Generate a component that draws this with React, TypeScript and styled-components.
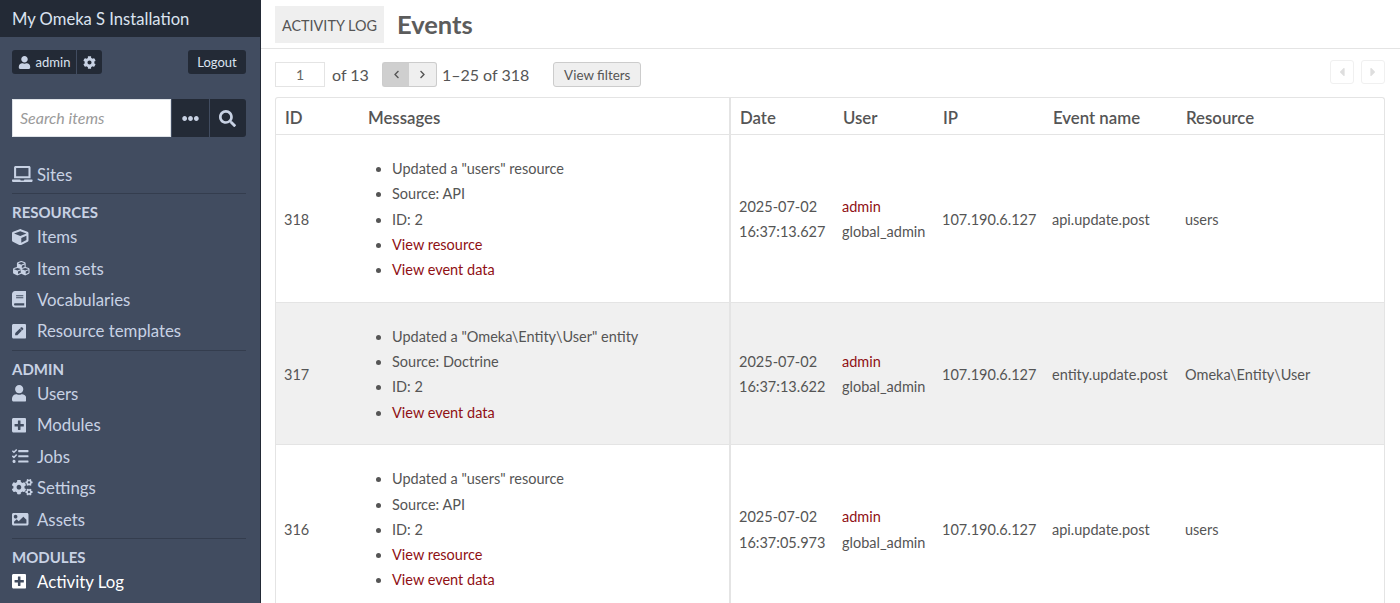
import React from 'react';
import styled, { createGlobalStyle } from 'styled-components';
import {
  FaUser, FaCog, FaEllipsisH, FaSearch, FaLaptop, FaCube, FaCubes, FaBook,
  FaPenSquare, FaPlusSquare, FaTasks, FaCogs, FaImage, FaChevronLeft, FaChevronRight, FaCaretLeft, FaCaretRight,
} from 'react-icons/fa';

const GlobalStyle = createGlobalStyle`
  html, body {
    margin: 0;
    height: 100%;
    overflow: hidden;
    background: #fff;
  }
  body {
    font-family: Lato, "Open Sans", sans-serif;
    color: #555;
  }
  * { box-sizing: border-box; }
`;

const Page = styled.div`
  display: flex;
  height: 603px;
  overflow: hidden;
`;

const Sidebar = styled.aside`
  flex: 0 0 261px;
  min-width: 0;
  background: #414c60;
  border-right: 1px solid #232a36;
  color: #c8d2e4;
`;

const Brand = styled.div`
  height: 37px;
  padding: 0 12px;
  background: #232a36;
  color: #dbe3f0;
  font-size: 16.6px;
  line-height: 38px;
`;

const UserBar = styled.div`
  display: flex;
  justify-content: space-between;
  padding: 13px 14px 0 12px;
`;

const UserGroup = styled.div`
  display: flex;
  gap: 1px;
`;

const DarkButton = styled.button<{ $left?: boolean; $right?: boolean }>`
  display: flex;
  align-items: center;
  justify-content: center;
  height: 24px;
  padding: 0;
  border: 0;
  border-radius: ${p => (p.$left ? '3px 0 0 3px' : p.$right ? '0 3px 3px 0' : '3px')};
  background: #232a36;
  color: #dbe3f0;
  font: 13px Lato, sans-serif;
  svg { font-size: 13px; color: #c8d2e4; }
`;

const AdminButton = styled(DarkButton)`
  gap: 5px;
  width: 64px;
`;

const GearButton = styled(DarkButton)`
  width: 25px;
`;

const LogoutButton = styled(DarkButton)`
  width: 58px;
`;

const SearchForm = styled.form`
  display: flex;
  gap: 1px;
  margin: 25px 14px 0 12px;
  height: 38px;
`;

const SearchInput = styled.input`
  flex: 1;
  width: 0;
  min-width: 0;
  padding: 0 7px 2px;
  border: 1px solid #dfe3e8;
  background: #fff;
  font: italic 16px Lato, sans-serif;
  color: #555;
  &::placeholder { color: #9a9a9a; opacity: 1; }
`;

const SearchButton = styled.button<{ $last?: boolean }>`
  display: flex;
  align-items: center;
  justify-content: center;
  width: 36.5px;
  padding: 0;
  border: 0;
  border-radius: ${p => (p.$last ? '0 3px 3px 0' : '0')};
  background: #232a36;
  color: #c8d2e4;
  font-size: 17px;
`;

const Nav = styled.nav`
  margin-top: 21.5px;
  padding: 0 14px 0 12px;
`;

const NavSection = styled.div`
  padding-bottom: 3px;
  margin-bottom: 9.2px;
  border-bottom: 1px solid #343d4e;
  &:last-child { border-bottom: 0; }
`;

const SectionTitle = styled.div`
  font-size: 15px;
  font-weight: 700;
  line-height: 18px;
`;

const NavLink = styled.a<{ $active?: boolean }>`
  display: flex;
  align-items: center;
  height: 31.4px;
  font-size: 16.8px;
  color: ${p => (p.$active ? '#fff' : '#c8d2e4')};
`;

const NavIcon = styled.span<{ $iconWidth: number }>`
  display: flex;
  width: 25px;
  flex: none;
  svg {
    height: 16.5px;
    width: ${p => p.$iconWidth}px;
  }
`;

const Main = styled.main`
  flex: 1;
  min-width: 0;
`;

const Header = styled.header`
  display: flex;
  align-items: center;
  gap: 13px;
  height: 49px;
  padding: 0 14px;
  border-bottom: 1px solid #e4e4e4;
`;

const Module = styled.div`
  height: 37px;
  padding: 0 7px;
  background: #efefef;
  font-size: 14.4px;
  line-height: 39px;
`;

const Title = styled.h1`
  margin: 0;
  font-size: 25.5px;
  font-weight: 700;
  color: #5c5c5c;
`;

const Toolbar = styled.div`
  display: flex;
  align-items: center;
  height: 48px;
  padding: 3px 15px 0 14px;
  font-size: 16px;
`;

const PageInput = styled.input`
  width: 50px;
  height: 25px;
  margin-right: 7px;
  border: 1px solid #e4e4e4;
  text-align: center;
  font: 14px Lato, sans-serif;
  color: #666;
`;

const Pager = styled.div`
  display: flex;
  margin: 0 5px 0 13px;
`;

const PagerButton = styled.button<{ $pressed?: boolean; $side: 'left' | 'right' }>`
  display: flex;
  align-items: center;
  justify-content: center;
  width: 27.5px;
  height: 25px;
  padding: 0;
  border: 1px solid #ccc;
  border-width: ${p => (p.$side === 'left' ? '1px 0 1px 1px' : '1px 1px 1px 0')};
  border-radius: ${p => (p.$side === 'left' ? '3px 0 0 3px' : '0 3px 3px 0')};
  background: ${p => (p.$pressed ? '#cfcfcf' : '#efefef')};
  color: #555;
  font-size: 9px;
`;

const FiltersButton = styled.button`
  width: 88px;
  height: 25px;
  margin-left: 24px;
  padding: 0;
  border: 1px solid #ccc;
  border-radius: 3px;
  background: #efefef;
  color: #555;
  font: 13.4px Lato, sans-serif;
`;

const CornerNav = styled.div`
  display: flex;
  gap: 7px;
  margin: -5px 0 0 auto;
`;

const CornerButton = styled.span`
  display: flex;
  align-items: center;
  justify-content: center;
  width: 24px;
  height: 24px;
  border: 1px solid #f0f0f0;
  border-radius: 3px;
  color: #dedede;
  font-size: 14px;
`;

const TableWrap = styled.div`
  margin: 0 15px 0 14px;
  border: 1px solid #e4e4e4;
  border-bottom: 0;
  border-radius: 3px 3px 0 0;
`;

const Table = styled.table`
  width: 100%;
  table-layout: fixed;
  border-collapse: collapse;
  font-size: 14.5px;
`;

const HeadCell = styled.th<{ $divider?: boolean }>`
  height: 36.5px;
  padding: 2px 9px 0;
  text-align: left;
  font-size: 16.8px;
  font-weight: 600;
  color: #555;
  border-bottom: 1px solid #e4e4e4;
  border-left: ${p => (p.$divider ? '2px solid #e4e4e4' : '0')};
`;

const Row = styled.tr<{ $shaded?: boolean }>`
  background: ${p => (p.$shaded ? '#f0f0f0' : '#fff')};
  border-bottom: 1px solid #e4e4e4;
`;

const Cell = styled.td<{ $divider?: boolean }>`
  padding: 2px 8px 0;
  line-height: 25.2px;
  border-left: ${p => (p.$divider ? '2px solid #e4e4e4' : '0')};
`;

const Messages = styled.ul`
  margin: 19.2px 0 19.5px;
  padding: 0 0 0 25px;
`;

const RedLink = styled.a`
  color: #8f1014;
`;

const Line = styled.div``;

interface EventRow {
  id: number;
  message: string;
  source: string;
  viewResource: boolean;
  date: string;
  time: string;
  event: string;
  resource: string;
}

const rows: EventRow[] = [
  { id: 318, message: 'Updated a "users" resource', source: 'API', viewResource: true, date: '2025-07-02', time: '16:37:13.627', event: 'api.update.post', resource: 'users' },
  { id: 317, message: 'Updated a "Omeka\\Entity\\User" entity', source: 'Doctrine', viewResource: false, date: '2025-07-02', time: '16:37:13.622', event: 'entity.update.post', resource: 'Omeka\\Entity\\User' },
  { id: 316, message: 'Updated a "users" resource', source: 'API', viewResource: true, date: '2025-07-02', time: '16:37:05.973', event: 'api.update.post', resource: 'users' },
];

// the svgs are square by default, these keep the glyph's own proportions
const navSections = [
  { items: [{ label: 'Sites', icon: <FaLaptop />, width: 20.6 }] },
  {
    title: 'RESOURCES',
    items: [
      { label: 'Items', icon: <FaCube />, width: 16.5 },
      { label: 'Item sets', icon: <FaCubes />, width: 18.6 },
      { label: 'Vocabularies', icon: <FaBook />, width: 14.4 },
      { label: 'Resource templates', icon: <FaPenSquare />, width: 14.4 },
    ],
  },
  {
    title: 'ADMIN',
    items: [
      { label: 'Users', icon: <FaUser />, width: 14.4 },
      { label: 'Modules', icon: <FaPlusSquare />, width: 14.4 },
      { label: 'Jobs', icon: <FaTasks />, width: 16.5 },
      { label: 'Settings', icon: <FaCogs />, width: 20.6 },
      { label: 'Assets', icon: <FaImage />, width: 16.5 },
    ],
  },
  {
    title: 'MODULES',
    items: [{ label: 'Activity Log', icon: <FaPlusSquare />, width: 14.4, active: true }],
  },
];

export default function App() {
  return (
    <Page>
      <GlobalStyle />
      <Sidebar>
        <Brand>My Omeka S Installation</Brand>
        <UserBar>
          <UserGroup>
            <AdminButton $left><FaUser /> admin</AdminButton>
            <GearButton $right><FaCog /></GearButton>
          </UserGroup>
          <LogoutButton>Logout</LogoutButton>
        </UserBar>
        <SearchForm>
          <SearchInput placeholder="Search items" />
          <SearchButton type="button"><FaEllipsisH /></SearchButton>
          <SearchButton type="button" $last><FaSearch /></SearchButton>
        </SearchForm>
        <Nav>
          {navSections.map((section, i) => (
            <NavSection key={i}>
              {section.title && <SectionTitle>{section.title}</SectionTitle>}
              {section.items.map(item => (
                <NavLink key={item.label} $active={'active' in item && item.active}>
                  <NavIcon $iconWidth={item.width}>{item.icon}</NavIcon>
                  {item.label}
                </NavLink>
              ))}
            </NavSection>
          ))}
        </Nav>
      </Sidebar>
      <Main>
        <Header>
          <Module>ACTIVITY LOG</Module>
          <Title>Events</Title>
        </Header>
        <Toolbar>
          <PageInput defaultValue="1" />
          of 13
          <Pager>
            <PagerButton $side="left" $pressed><FaChevronLeft /></PagerButton>
            <PagerButton $side="right"><FaChevronRight /></PagerButton>
          </Pager>
          1–25 of 318
          <FiltersButton>View filters</FiltersButton>
          <CornerNav>
            <CornerButton><FaCaretLeft /></CornerButton>
            <CornerButton><FaCaretRight /></CornerButton>
          </CornerNav>
        </Toolbar>
        <TableWrap>
          <Table>
            <colgroup>
              <col width="83" />
              <col width="371" />
              <col width="104" />
              <col width="100" />
              <col width="110" />
              <col width="133" />
              <col />
            </colgroup>
            <thead>
              <tr>
                <HeadCell>ID</HeadCell>
                <HeadCell>Messages</HeadCell>
                <HeadCell $divider>Date</HeadCell>
                <HeadCell>User</HeadCell>
                <HeadCell>IP</HeadCell>
                <HeadCell>Event name</HeadCell>
                <HeadCell>Resource</HeadCell>
              </tr>
            </thead>
            <tbody>
              {rows.map((r, i) => (
                <Row key={r.id} $shaded={i % 2 === 1}>
                  <Cell>{r.id}</Cell>
                  <Cell>
                    <Messages>
                      <li>{r.message}</li>
                      <li>Source: {r.source}</li>
                      <li>ID: 2</li>
                      {r.viewResource && <li><RedLink>View resource</RedLink></li>}
                      <li><RedLink>View event data</RedLink></li>
                    </Messages>
                  </Cell>
                  <Cell $divider>
                    <Line>{r.date}</Line>
                    <Line>{r.time}</Line>
                  </Cell>
                  <Cell>
                    <Line><RedLink>admin</RedLink></Line>
                    <Line>global_admin</Line>
                  </Cell>
                  <Cell>107.190.6.127</Cell>
                  <Cell>{r.event}</Cell>
                  <Cell>{r.resource}</Cell>
                </Row>
              ))}
            </tbody>
          </Table>
        </TableWrap>
      </Main>
    </Page>
  );
}
